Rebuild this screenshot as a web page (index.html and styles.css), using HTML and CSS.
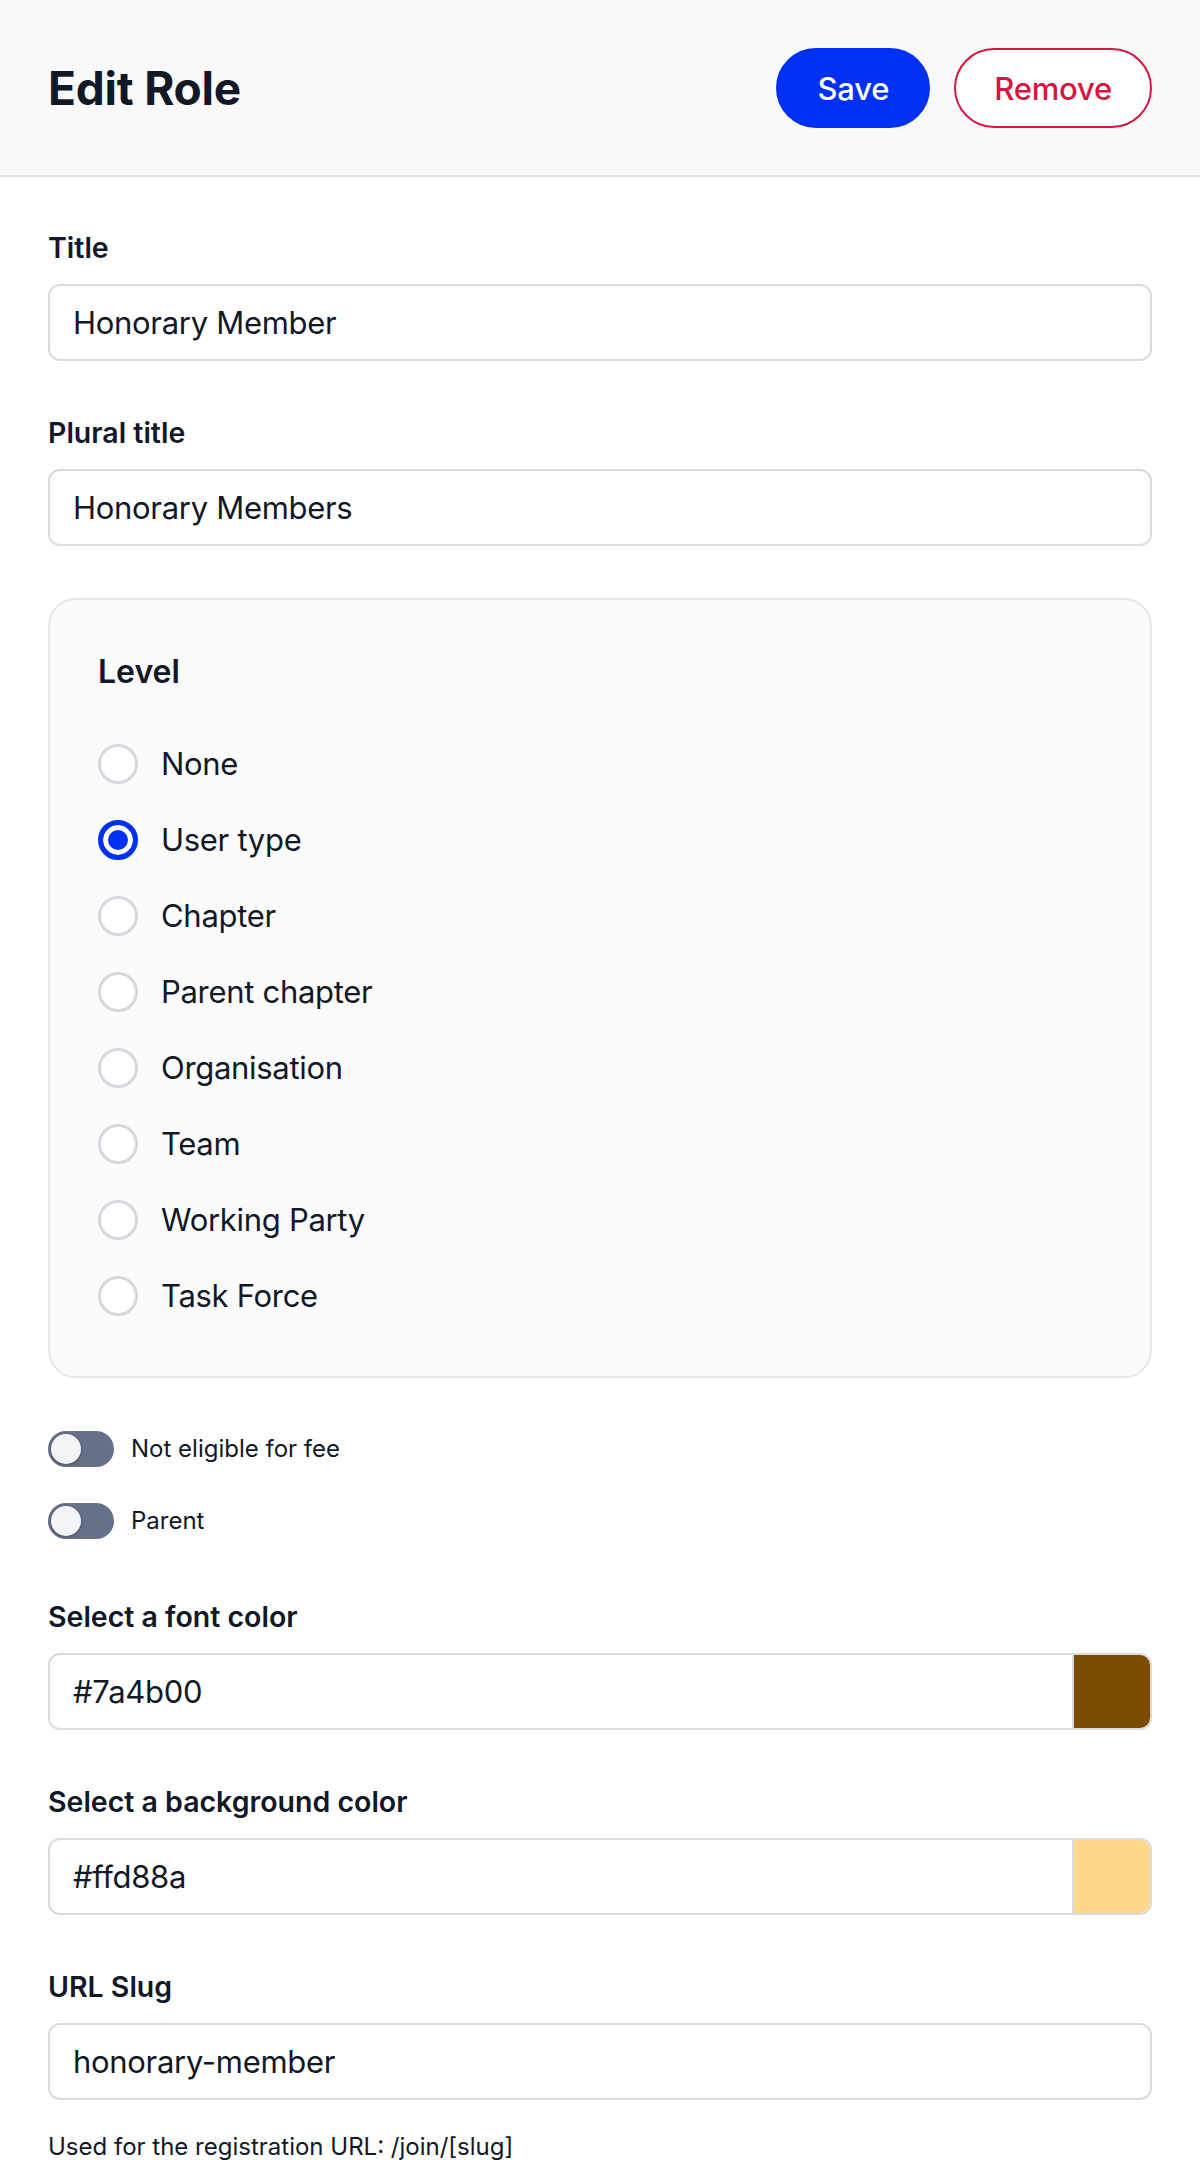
FILE: index.html
```html
<!DOCTYPE html>
<html lang="en">
<head>
<meta charset="utf-8">
<title>Edit Role</title>
<link rel="stylesheet" href="styles.css">
</head>
<body>
<header class="header">
  <h1 class="page-title">Edit Role</h1>
  <div class="actions">
    <button class="btn btn-primary" type="button">Save</button>
    <button class="btn btn-danger" type="button">Remove</button>
  </div>
</header>
<main class="form">
  <div class="field">
    <label class="label">Title</label>
    <div class="input"><span>Honorary Member</span></div>
  </div>
  <div class="field">
    <label class="label">Plural title</label>
    <div class="input"><span>Honorary Members</span></div>
  </div>
  <fieldset class="level-box">
    <div class="legend">Level</div>
    <ul class="radio-list">
      <li class="radio-row"><span class="radio"></span><span class="radio-label">None</span></li>
      <li class="radio-row"><span class="radio checked"></span><span class="radio-label">User type</span></li>
      <li class="radio-row"><span class="radio"></span><span class="radio-label">Chapter</span></li>
      <li class="radio-row"><span class="radio"></span><span class="radio-label">Parent chapter</span></li>
      <li class="radio-row"><span class="radio"></span><span class="radio-label">Organisation</span></li>
      <li class="radio-row"><span class="radio"></span><span class="radio-label">Team</span></li>
      <li class="radio-row"><span class="radio"></span><span class="radio-label">Working Party</span></li>
      <li class="radio-row"><span class="radio"></span><span class="radio-label">Task Force</span></li>
    </ul>
  </fieldset>
  <div class="toggles">
    <div class="toggle-row"><span class="toggle"><span class="knob"></span></span><span class="toggle-label">Not eligible for fee</span></div>
    <div class="toggle-row"><span class="toggle"><span class="knob"></span></span><span class="toggle-label">Parent</span></div>
  </div>
  <div class="field">
    <label class="label">Select a font color</label>
    <div class="input color-input"><span class="color-text">#7a4b00</span><span class="swatch swatch-font"></span></div>
  </div>
  <div class="field">
    <label class="label">Select a background color</label>
    <div class="input color-input"><span class="color-text">#ffd88a</span><span class="swatch swatch-bg"></span></div>
  </div>
  <div class="field">
    <label class="label">URL Slug</label>
    <div class="input"><span>honorary-member</span></div>
    <p class="help">Used for the registration URL: /join/[slug]</p>
  </div>
</main>
</body>
</html>
```

FILE: styles.css
```css
* { box-sizing: border-box; }
html, body { margin: 0; padding: 0; background: #ffffff; }
body {
  font-family: Inter, "Noto Sans", "Liberation Sans", sans-serif;
  color: #111827;
}
.header {
  display: flex;
  align-items: center;
  justify-content: space-between;
  padding: 48px 48px 47px 48px;
  background: #f9f9fa;
  border-bottom: 2px solid #e5e5e7;
}
.page-title {
  margin: 0;
  font-size: 46px;
  line-height: 56px;
  font-weight: 700;
  letter-spacing: -0.2px;
}
.actions { display: flex; gap: 24px; }
.btn {
  height: 80px;
  padding: 0 38px;
  border-radius: 40px;
  font-family: inherit;
  font-size: 31px;
  font-weight: 500;
  letter-spacing: -0.2px;
  border: 2px solid transparent;
  cursor: pointer;
}
.btn-primary { background: #0030f2; border-color: #0030f2; color: #ffffff; padding: 0 39px; }
.btn-danger { background: #ffffff; border-color: #d5173f; color: #d5173f; }

.form {
  padding: 51px 48px 0 48px;
  display: flex;
  flex-direction: column;
  gap: 52px;
}
.field { display: flex; flex-direction: column; }
.label {
  font-size: 28.5px;
  line-height: 40px;
  font-weight: 600;
  margin-bottom: 16px;
}
.input {
  height: 77px;
  border: 2px solid #dadbdd;
  border-radius: 12px;
  background: #ffffff;
  display: flex;
  align-items: center;
  padding-left: 23px;
  font-size: 31px;
  letter-spacing: -0.3px;
}
.color-input { padding-right: 0; overflow: hidden; }
.color-text { flex: 1; }
.swatch {
  width: 78px;
  align-self: stretch;
  border-left: 2px solid #dadbdd;
}
.swatch-font { background: #7a4b00; }
.swatch-bg { background: #ffd88a; }

.level-box {
  margin: 0;
  border: 2px solid #e6e7ea;
  border-radius: 28px;
  background: #fbfbfc;
  padding: 48px 48px 42px 48px;
}
.legend {
  font-size: 32px;
  line-height: 48px;
  font-weight: 600;
}
.radio-list {
  list-style: none;
  margin: 30px 0 0 0;
  padding: 0;
}
.radio-row {
  height: 76px;
  display: flex;
  align-items: center;
  gap: 23px;
}
.radio {
  width: 40px;
  height: 40px;
  border-radius: 50%;
  border: 3px solid #d6d8dd;
  background: #ffffff;
  flex: none;
}
.radio.checked {
  border: 5px solid #0030f2;
  background: #0030f2;
  box-shadow: inset 0 0 0 5px #ffffff;
}
.radio-label { font-size: 31px; line-height: 44px; letter-spacing: -0.3px; }

.toggles { display: flex; flex-direction: column; gap: 24px; margin-top: -5px; }
.toggle-row { display: flex; align-items: center; gap: 17px; height: 48px; }
.toggle {
  width: 66px;
  height: 36px;
  border-radius: 18px;
  background: #667089;
  display: flex;
  align-items: center;
  padding-left: 3px;
  flex: none;
}
.knob {
  width: 30px;
  height: 30px;
  border-radius: 50%;
  background: #f3f4f6;
  box-shadow: 0 1px 3px rgba(0,0,0,0.3);
}
.toggle-label { font-size: 24px; line-height: 32px; }

.help {
  margin: 34px 0 0 0;
  font-size: 24px;
  line-height: 26px;
}
```
